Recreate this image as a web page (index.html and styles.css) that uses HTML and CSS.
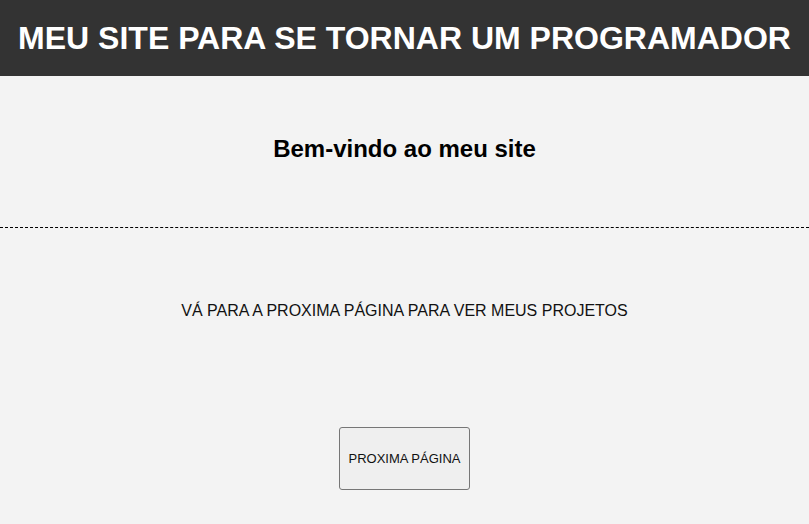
FILE: index.html
```html
<!DOCTYPE html>
<html lang="pt">
<head>
<meta charset="utf-8">
<title>Meu site</title>
<link rel="stylesheet" href="styles.css">
</head>
<body>
<header class="topo">
  <h1 class="titulo">MEU SITE PARA SE TORNAR UM PROGRAMADOR</h1>
</header>
<main>
  <section class="boas-vindas">
    <h2 class="subtitulo">Bem-vindo ao meu site</h2>
  </section>
  <section class="conteudo">
    <p class="texto">VÁ PARA A PROXIMA PÁGINA PARA VER MEUS PROJETOS</p>
    <button class="botao" type="button">PROXIMA PÁGINA</button>
  </section>
</main>
</body>
</html>
```
FILE: styles.css
```css
html, body {
  margin: 0;
  padding: 0;
}
body {
  background: #f3f3f3;
  font-family: "Liberation Sans", Arial, sans-serif;
  color: #000;
}
.topo {
  background: #333333;
  padding: 20px 0;
  text-align: center;
}
.titulo {
  margin: 0;
  color: #fff;
  font-size: 32px;
  line-height: 36px;
  font-weight: bold;
}
.boas-vindas {
  padding: 59px 0 64px;
  text-align: center;
  border-bottom: 1px dashed #000;
}
.subtitulo {
  margin: 0;
  font-size: 24px;
  line-height: 28px;
  font-weight: bold;
}
.conteudo {
  display: flex;
  flex-direction: column;
  align-items: center;
  padding-top: 74px;
}
.texto {
  margin: 0;
  font-size: 16px;
  line-height: 18px;
  color: #111;
}
.botao {
  margin-top: 107px;
  width: 131px;
  height: 63px;
  padding: 0 6px;
  background: #efefef;
  border: 1px solid #767676;
  border-radius: 3px;
  font-family: "Liberation Sans", Arial, sans-serif;
  font-size: 13px;
  color: #111;
}
```
